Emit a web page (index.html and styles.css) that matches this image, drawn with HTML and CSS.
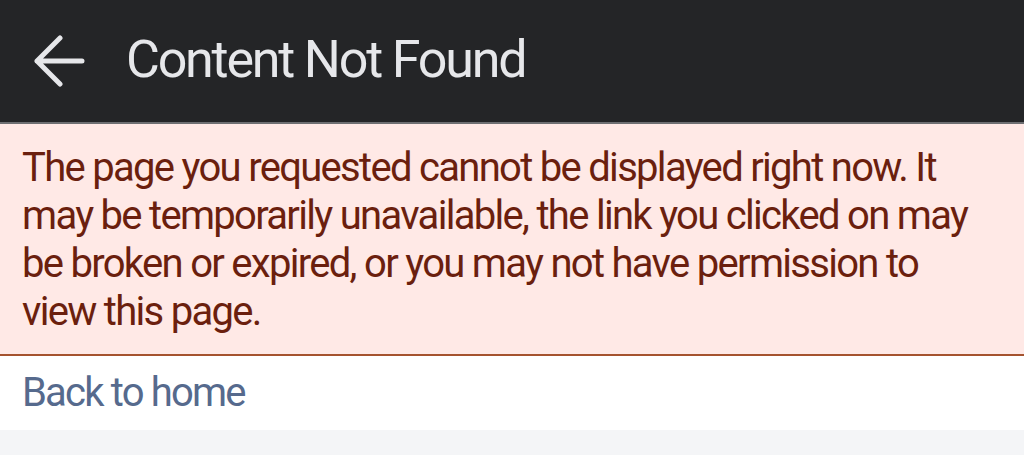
FILE: index.html
```html
<!DOCTYPE html>
<html lang="en">
<head>
  <meta charset="UTF-8">
  <title>Content Not Found</title>
  <link rel="stylesheet" href="styles.css">
</head>
<body>

  <div class="topbar">
    <svg class="back" width="51" height="52" viewBox="0 0 51 52">
      <path d="M26 3L3 26L26 49M3 26H48" fill="none" stroke="#e6e7ea" stroke-width="5" stroke-linecap="round" stroke-linejoin="round"/>
    </svg>
    <h1>Content Not Found</h1>
  </div>

  <div class="notice">
    The page you requested cannot be displayed right now. It may be temporarily unavailable, the link you clicked on may be broken or expired, or you may not have permission to view this page.
  </div>

  <div class="links">
    <a href="#">Back to home</a>
  </div>

</body>
</html>
```

FILE: styles.css
```css
body { margin: 0; background: #f4f5f7; font-family: Roboto, "Noto Sans", sans-serif; }
.topbar { background: #242527; height: 122px; border-bottom: 2px solid #6e6f72; display: flex; align-items: center; padding-left: 34px; gap: 41px; }
.topbar h1 { margin: 0 0 4px; color: #e6e7ea; font-size: 52px; font-weight: 400; letter-spacing: -2.2px; }
.back { flex: none; }
.notice { background: #ffe9e6; color: #6b1f0e; font-size: 40px; line-height: 48px; letter-spacing: -1.7px; padding: 20px 30px 18px 22px; border-bottom: 2px solid #a5532f; }
.links { background: white; padding: 13px 22px; font-size: 40px; line-height: 48px; letter-spacing: -1.8px; }
.links a { color: #566a8d; text-decoration: none; }
```
